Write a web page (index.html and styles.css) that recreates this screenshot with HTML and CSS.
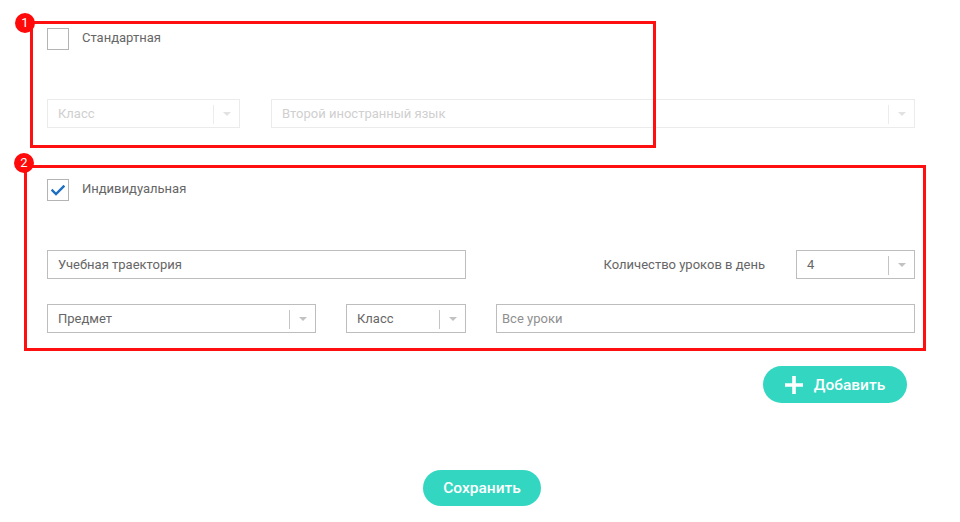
FILE: index.html
```html
<!DOCTYPE html>
<html lang="ru">
<head>
<meta charset="utf-8">
<title>Учебные траектории</title>
<link rel="stylesheet" href="styles.css">
</head>
<body>
<div class="page">
  <form class="form">
    <label class="check-row">
      <span class="checkbox"></span>
      <span class="check-label">Стандартная</span>
    </label>

    <div class="row row-faded">
      <div class="select faded w-class-a"><span class="val">Класс</span><span class="sep"></span><span class="arrow"></span></div>
      <div class="select faded grow"><span class="val">Второй иностранный язык</span><span class="sep"></span><span class="arrow"></span></div>
    </div>

    <label class="check-row check-row-2">
      <span class="checkbox checked">
        <svg width="14" height="11" viewBox="0 0 14 11"><path d="M1.5 5.5 L5 9 L12.5 1.5" fill="none" stroke="#1d6fc2" stroke-width="2.4" stroke-linecap="square"/></svg>
      </span>
      <span class="check-label">Индивидуальная</span>
    </label>

    <div class="row row-traj">
      <div class="input w-half"><span class="val">Учебная траектория</span></div>
      <span class="field-label">Количество уроков в день</span>
      <div class="select w-count"><span class="val">4</span><span class="sep"></span><span class="arrow"></span></div>
    </div>

    <div class="row row-subject">
      <div class="select w-subject"><span class="val">Предмет</span><span class="sep"></span><span class="arrow"></span></div>
      <div class="select w-class"><span class="val">Класс</span><span class="sep"></span><span class="arrow"></span></div>
      <div class="input w-half lessons"><span class="val placeholder">Все уроки</span></div>
    </div>

    <div class="add-row">
      <button type="button" class="btn btn-add">
        <svg width="18" height="18" viewBox="0 0 18 18"><path d="M9 0 V18 M0 9 H18" stroke="#fff" stroke-width="3.6"/></svg>
        <span>Добавить</span>
      </button>
    </div>

    <div class="save-row">
      <button type="button" class="btn btn-save">Сохранить</button>
    </div>
  </form>

  <div class="mark mark-1"><span class="badge">1</span></div>
  <div class="mark mark-2"><span class="badge">2</span></div>
</div>
</body>
</html>
```

FILE: styles.css
```css
* { box-sizing: border-box; }
html, body { margin: 0; padding: 0; background: #fff; }
body {
  font-family: Roboto, "Liberation Sans", Arial, sans-serif;
  font-size: 13px;
  color: #666;
}
.page {
  position: relative;
  width: 960px;
  height: 522px;
  overflow: hidden;
}
.form {
  width: 960px;
  padding: 28px 45px 0 47px;
}
.check-row {
  display: flex;
  align-items: center;
  height: 22px;
}
.check-row-2 { margin-top: 51px; }
.checkbox {
  width: 22px;
  height: 22px;
  border: 1px solid #b4b4b4;
  background: #fff;
  display: flex;
  align-items: center;
  justify-content: center;
}
.check-label {
  margin-left: 13px;
  color: #666;
  font-size: 13px;
  line-height: 16px;
  margin-top: -2px;
}
.row {
  display: flex;
  align-items: center;
}
.row-faded { margin-top: 49px; gap: 31px; }
.row-traj { margin-top: 49px; }
.row-subject { margin-top: 25px; gap: 30px; }

.select, .input {
  position: relative;
  height: 29px;
  border: 1px solid #bdbdbd;
  display: flex;
  align-items: center;
  background: #fff;
}
.val {
  padding-left: 10px;
  color: #666;
  font-size: 13px;
  white-space: nowrap;
  flex: 1;
}
.lessons .val { padding-left: 5px; }
.placeholder { color: #8f8f8f; }
.sep {
  width: 1px;
  height: 19px;
  background: #c4c4c4;
  margin-top: 1px;
}
.arrow {
  width: 25px;
  height: 100%;
  display: flex;
  align-items: center;
  justify-content: center;
}
.arrow::before {
  content: "";
  width: 0;
  height: 0;
  border-left: 4px solid transparent;
  border-right: 4px solid transparent;
  border-top: 4px solid #c2c2c2;
  margin-top: 1px;
}
.faded { border-color: #ebebeb; }
.faded .val { color: #cfcfcf; }
.faded .sep { background: #ececec; }
.faded .arrow::before { border-top-color: #e2e2e2; }

.w-class-a { width: 193px; }
.grow { flex: 1; }
.w-half { width: 419px; }
.w-count { width: 119px; margin-left: 31px; }
.w-subject { width: 269px; }
.w-class { width: 120px; }
.field-label {
  margin-left: auto;
  color: #666;
  font-size: 13px;
}

.add-row {
  display: flex;
  justify-content: flex-end;
  margin-top: 33px;
  padding-right: 8px;
}
.btn {
  border: 0;
  background: #33d7c1;
  color: #fff;
  font-family: Roboto, "Liberation Sans", Arial, sans-serif;
  font-weight: 500;
  font-size: 15px;
  border-radius: 19px;
  cursor: pointer;
  display: flex;
  align-items: center;
  justify-content: center;
}
.btn-add {
  width: 144px;
  height: 37px;
  padding: 0 0 0 0;
  gap: 11px;
  font-size: 15.5px;
}
.save-row {
  display: flex;
  justify-content: center;
  margin-top: 67px;
  padding-left: 2px;
}
.btn-save {
  width: 118px;
  height: 36px;
  font-size: 15.5px;
}

.mark {
  position: absolute;
  border: 3px solid #ff1010;
  pointer-events: none;
}
.mark-1 { left: 30px; top: 21px; width: 626px; height: 127px; }
.mark-2 { left: 24px; top: 165px; width: 902px; height: 186px; }
.badge {
  position: absolute;
  width: 20px;
  height: 20px;
  border-radius: 50%;
  background: #ff0a0a;
  color: #fff;
  font-size: 13px;
  line-height: 20px;
  text-align: center;
  font-family: Roboto, "Liberation Sans", Arial, sans-serif;
}
.mark-1 .badge { left: -18px; top: -11px; }
.mark-2 .badge { left: -13px; top: -15px; }
```
